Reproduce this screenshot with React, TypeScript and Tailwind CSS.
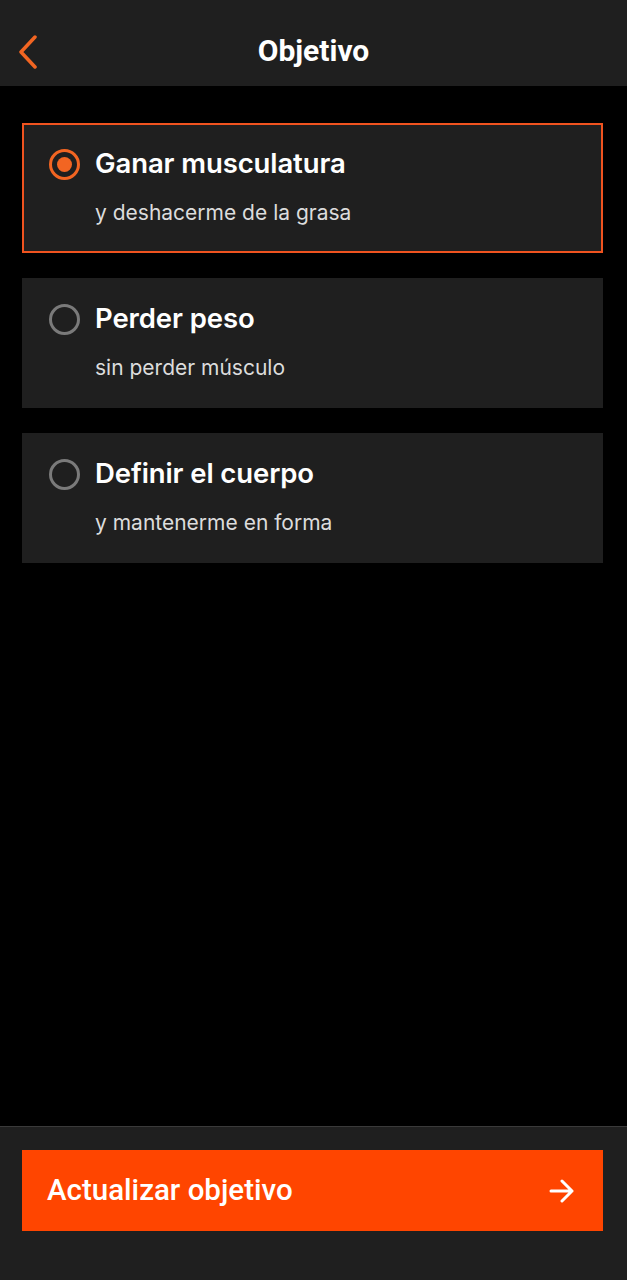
import { useState } from "react";

const goals = [
  { id: "gain", title: "Ganar musculatura", subtitle: "y deshacerme de la grasa" },
  { id: "lose", title: "Perder peso", subtitle: "sin perder músculo" },
  { id: "define", title: "Definir el cuerpo", subtitle: "y mantenerme en forma" },
];

export default function App() {
  const [selected, setSelected] = useState("gain");

  return (
    <div className="flex h-[1280px] w-[627px] flex-col bg-black font-['Inter',sans-serif] text-white">
      {/* Header */}
      <div className="relative flex h-[86px] shrink-0 items-center justify-center bg-[#1f1f1f] pt-[16px]">
        <button className="absolute left-[16px] top-[35px]" aria-label="Volver">
          <svg width="24" height="34" viewBox="0 0 24 34" fill="none">
            <path d="M19 2 L5 17 L19 32" stroke="#f26522" strokeWidth="3.5" strokeLinecap="round" strokeLinejoin="round" />
          </svg>
        </button>
        <h1 className="font-['Roboto',sans-serif] text-[30px] font-bold leading-none">Objetivo</h1>
      </div>

      {/* Options */}
      <div className="flex flex-1 flex-col gap-[25px] pl-[22px] pr-[24px] pt-[37px]">
        {goals.map((g) => {
          const active = g.id === selected;
          return (
            <button
              key={g.id}
              onClick={() => setSelected(g.id)}
              className={`flex h-[130px] items-start bg-[#1f1f1f] text-left ${
                active ? "border-2 border-[#f0531f] pl-[25px] pt-[22px]" : "pl-[27px] pt-[24px]"
              }`}
            >
              <span
                className={`mt-[2px] flex h-[31px] w-[31px] shrink-0 items-center justify-center rounded-full border-[3px] ${
                  active ? "border-[#f26522]" : "border-[#7a7a7a]"
                }`}
              >
                {active && <span className="h-[15px] w-[15px] rounded-full bg-[#f26522]" />}
              </span>
              <span className="ml-[15px] flex flex-col">
                <span className="text-[27.5px] font-semibold leading-[32px] tracking-[-0.1px]">{g.title}</span>
                <span className="mt-[21px] text-[21px] leading-[26px] text-[#dcdcdc]">{g.subtitle}</span>
              </span>
            </button>
          );
        })}
      </div>

      {/* Footer */}
      <div className="h-[154px] shrink-0 border-t border-[#3a3a3a] bg-[#1f1f1f] pl-[22px] pr-[24px] pt-[23px]">
        <button className="flex h-[81px] w-full items-center justify-between bg-[#ff4500] pl-[25px] pr-[28px] font-['Roboto',sans-serif]">
          <span className="text-[29.5px] font-medium">Actualizar objetivo</span>
          <svg width="26" height="24" viewBox="0 0 26 24" fill="none">
            <path d="M2 12 H23 M13 2 L23 12 L13 22" stroke="white" strokeWidth="3" strokeLinecap="round" strokeLinejoin="round" />
          </svg>
        </button>
      </div>
    </div>
  );
}
